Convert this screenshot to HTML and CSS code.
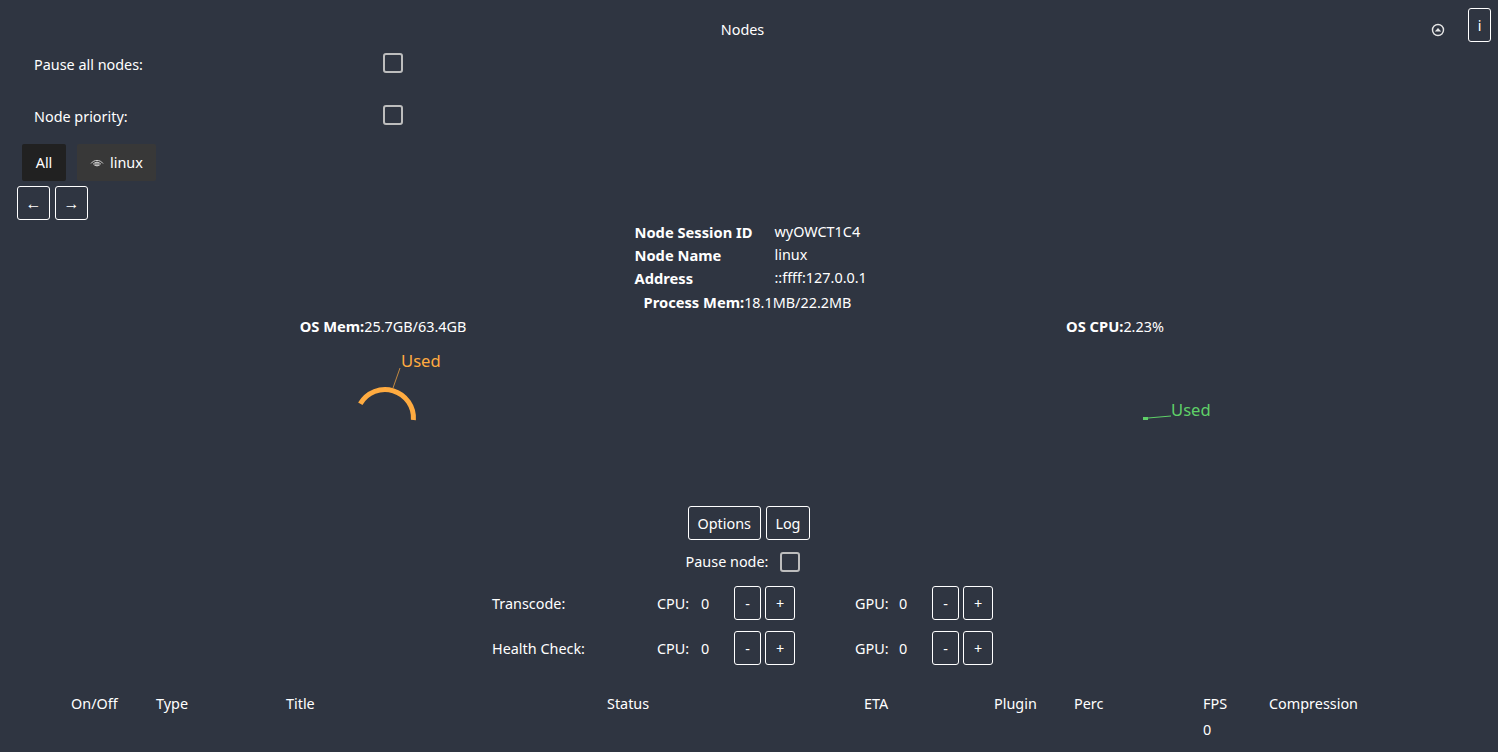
FILE: index.html
```html
<!DOCTYPE html>
<html lang="en">
<head>
    <title>Nodes</title>
    <meta name="viewport" content="width=device-width, initial-scale=1.0" />
    <link rel="stylesheet" href="styles.css">
</head>

<body>
    <div class="header">
        <span class="header-title">Nodes</span>
        <svg class="collapse-icon" width="14" height="14" viewBox="0 0 14 14">
            <circle cx="7" cy="7" r="5.5" fill="none" stroke="#e6e6e6" stroke-width="1.4"></circle>
            <path d="M3.8 8.6 L7 5 L10.2 8.6 Z" fill="#e6e6e6"></path>
        </svg>
        <button class="btn btn-info">i</button>
    </div>

    <div class="toggles">
        <div class="toggle-row">
            <span>Pause all nodes:</span>
            <div class="check"></div>
        </div>
        <div class="toggle-row">
            <span>Node priority:</span>
            <div class="check"></div>
        </div>
    </div>

    <div class="tabs">
        <div class="tab tab-active">All</div>
        <div class="tab">
            <svg width="14" height="14" viewBox="0 0 14 14" fill="none" stroke="#cfcfcf" stroke-width="1">
                <path d="M1 7.5 C4 3.4 10 3.4 13 7.5"></path>
                <path d="M3.4 8 C5.4 5.6 8.6 5.6 10.6 8 C8.6 10.4 5.4 10.4 3.4 8 Z"></path>
                <circle cx="7" cy="8" r="1.3"></circle>
            </svg>
            linux
        </div>
    </div>

    <div class="pager">
        <button class="btn btn-arrow">←</button>
        <button class="btn btn-arrow">→</button>
    </div>

    <div class="node-info">
        <div class="info-table">
            <b>Node Session ID</b><span>wyOWCT1C4</span>
            <b>Node Name</b><span>linux</span>
            <b>Address</b><span>::ffff:127.0.0.1</span>
        </div>
        <div class="process-mem"><b>Process Mem:</b>18.1MB/22.2MB</div>
    </div>

    <div class="stats">
        <div class="stat">
            <div><b>OS Mem:</b>25.7GB/63.4GB</div>
            <svg class="gauge" width="732" height="165" viewBox="0 0 732 165">
                <path d="M396.4 83 A28.5 28.5 0 0 0 343.3 66.75" fill="none" stroke="#ffab40" stroke-width="5"></path>
                <path d="M376 51 L383 31" fill="none" stroke="#ffab40" stroke-opacity="0.7"></path>
                <text x="384" y="30" fill="#ffab40" class="gauge-label">Used</text>
            </svg>
        </div>
        <div class="stat">
            <div><b>OS CPU:</b>2.23%</div>
            <svg class="gauge" width="732" height="165" viewBox="0 0 732 165">
                <rect x="394" y="80" width="5" height="3" fill="#5fd068"></rect>
                <path d="M399 81 L422 79" fill="none" stroke="#5fd068"></path>
                <text x="422" y="79" fill="#5fd068" class="gauge-label">Used</text>
            </svg>
        </div>
    </div>

    <div class="node-actions">
        <button class="btn btn-text">Options</button>
        <button class="btn btn-text">Log</button>
    </div>

    <div class="pause-node">
        <span>Pause node:</span>
        <div class="check"></div>
    </div>

    <div class="workers">
        <span>Transcode:</span>
        <span>CPU:</span><span>0</span>
        <div class="stepper"><button class="btn btn-minus">-</button><button class="btn btn-plus">+</button></div>
        <span>GPU:</span><span>0</span>
        <div class="stepper"><button class="btn btn-minus">-</button><button class="btn btn-plus">+</button></div>

        <span>Health Check:</span>
        <span>CPU:</span><span>0</span>
        <div class="stepper"><button class="btn btn-minus">-</button><button class="btn btn-plus">+</button></div>
        <span>GPU:</span><span>0</span>
        <div class="stepper"><button class="btn btn-minus">-</button><button class="btn btn-plus">+</button></div>
    </div>

    <div class="jobs">
        <span>On/Off</span>
        <span>Type</span>
        <span>Title</span>
        <span>Status</span>
        <span>ETA</span>
        <span>Plugin</span>
        <span>Perc</span>
        <span>FPS</span>
        <span>Compression</span>
        <span class="fps-value">0</span>
    </div>
</body>

</html>
```

FILE: styles.css
```css
* {
    box-sizing: border-box;
}

html, body {
    height: 100%;
    overflow: hidden;
}

body {
    margin: 0;
    background: #2f3541;
    color: #ffffff;
    font-family: "Noto Sans", "Open Sans", sans-serif;
    font-size: 14.4px;
    line-height: 20px;
}

b {
    font-size: 14.7px;
}

.btn {
    background: transparent;
    border: 1px solid #ffffff;
    border-radius: 3px;
    color: #ffffff;
    font-family: inherit;
    font-size: 14.4px;
    padding: 0;
}

.check {
    width: 20px;
    height: 20px;
    border: 2px solid #bdbdbd;
    border-radius: 3px;
}

/* header */
.header {
    display: flex;
    align-items: flex-start;
    justify-content: center;
    height: 48px;
    padding-top: 8px;
    position: relative;
}

.header-title {
    margin-top: 12px;
    margin-right: 13px;
}

.collapse-icon {
    position: absolute;
    left: 1431px;
    top: 23px;
}

.btn-info {
    position: absolute;
    left: 1468px;
    top: 8px;
    width: 23px;
    height: 34px;
}

/* top toggles */
.toggles {
    display: grid;
    row-gap: 22px;
    margin-bottom: 14px;
}

.toggle-row {
    display: flex;
    align-items: center;
    height: 30px;
    padding-left: 34px;
}

.toggle-row span {
    width: 349px;
    margin-top: 3px;
}

.tabs {
    display: flex;
    gap: 11px;
    padding-left: 22px;
}

.tab {
    display: flex;
    align-items: center;
    gap: 6px;
    height: 37px;
    padding: 1px 13px 0;
    background: #383838;
    border-radius: 2px;
}

.tab-active {
    justify-content: center;
    width: 44px;
    padding: 1px 0 0;
    background: #212121;
}

.pager {
    display: flex;
    gap: 5px;
    margin-top: 5px;
    padding-left: 17px;
}

.btn-arrow {
    width: 33px;
    height: 34px;
    font-size: 16px;
}

/* node info */
.node-info {
    display: flex;
    flex-direction: column;
    align-items: center;
}

.info-table {
    display: grid;
    grid-template-columns: 140px 89px;
    grid-auto-rows: 23px;
    align-items: center;
}

.process-mem {
    margin-top: 1px;
    padding-right: 3px;
    line-height: 24px;
}

.stats {
    display: grid;
    grid-template-columns: 732px 732px;
    padding-left: 17px;
    margin-top: -1px;
}

.stat {
    display: flex;
    flex-direction: column;
    align-items: center;
    line-height: 24px;
}

.gauge {
    display: block;
    margin-top: -2px;
}

.gauge-label {
    font-size: 16.6px;
}

/* node actions */
.node-actions {
    display: flex;
    justify-content: center;
    gap: 5px;
    margin-top: 4px;
}

.btn-text {
    height: 34px;
    padding: 0 8.7px;
}

.pause-node {
    display: flex;
    justify-content: center;
    align-items: center;
    gap: 12px;
    height: 30px;
    margin-top: 7px;
    padding-right: 12px;
}

.workers {
    display: grid;
    grid-template-columns: 165px 44px 33px 121px 44px 33px 61px;
    grid-auto-rows: 34px;
    row-gap: 11px;
    align-items: center;
    margin-top: 9px;
    margin-left: 492px;
}

.workers > span {
    margin-top: 2px;
}

.stepper {
    display: flex;
    gap: 4px;
}

.btn-minus {
    width: 27px;
    height: 34px;
}

.btn-plus {
    width: 30px;
    height: 34px;
}

/* jobs table */
.jobs {
    display: grid;
    grid-template-columns: 85px 130px 321px 257px 130px 80px 129px 66px 120px;
    grid-auto-rows: 26px;
    align-items: center;
    margin-top: 26px;
    margin-left: 71px;
}

.fps-value {
    grid-column: 8;
}
```
